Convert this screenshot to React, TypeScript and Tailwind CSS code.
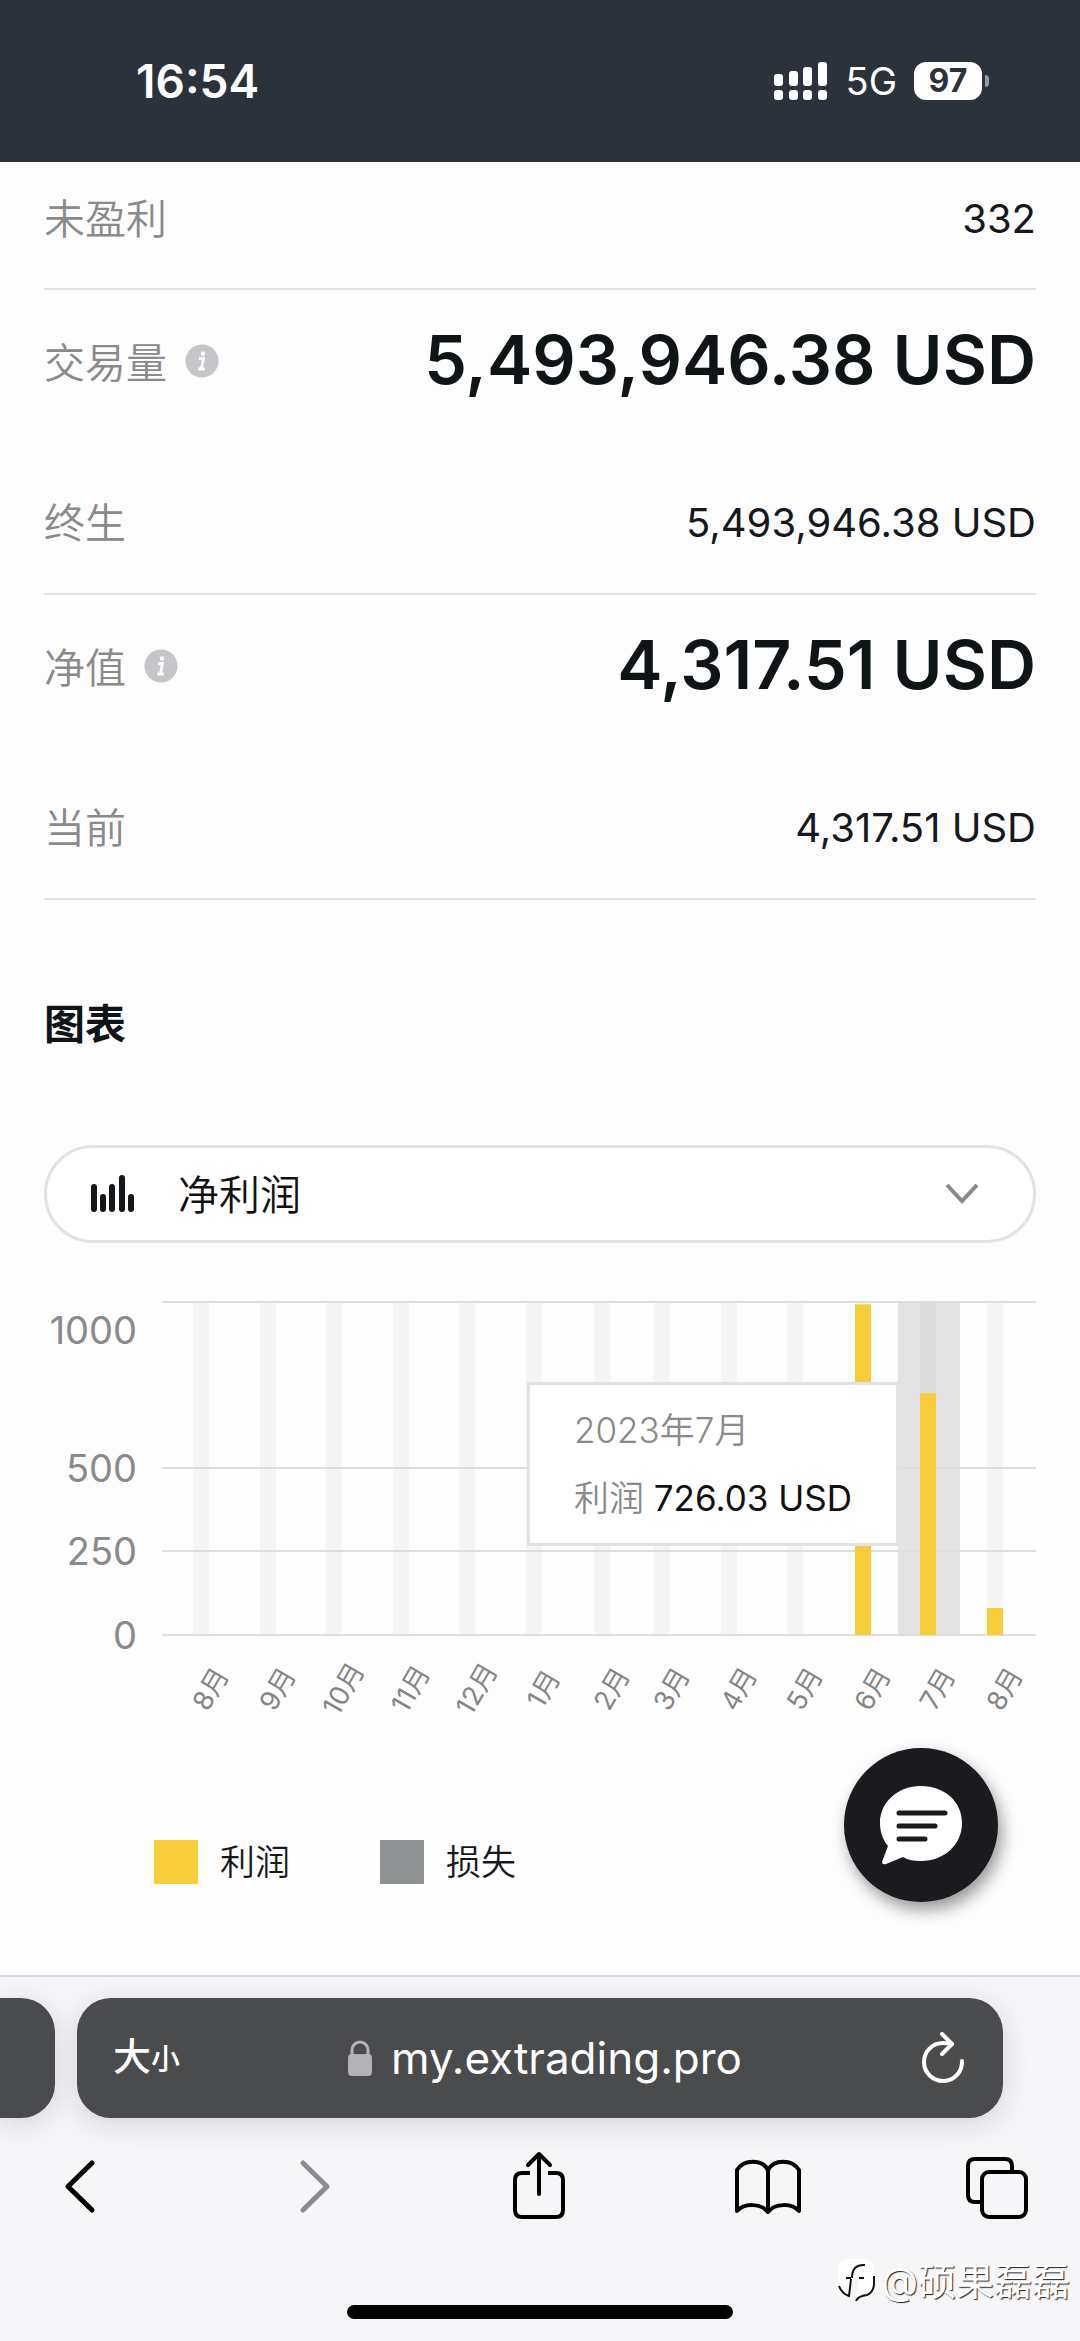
import React from "react";

const latin = "font-['Inter','Noto_Sans_CJK_SC',sans-serif]";

function InfoIcon() {
  return (
    <svg viewBox="0 0 34 34" className="h-[34px] w-[34px]" aria-hidden="true">
      <circle cx="17" cy="17" r="16.5" fill="#c5c5ca" />
      <circle cx="18" cy="9.6" r="2.3" fill="#fff" />
      <path d="M14 14.5h4.4l-1.9 10M13.2 25h6.6" stroke="#fff" strokeWidth="2.8" fill="none" />
    </svg>
  );
}

function Row({ label, value }: { label: string; value: string }) {
  return (
    <div className="flex items-center justify-between text-[41px] leading-[60px]">
      <dt className="font-[350] text-[#8a8a8a]">{label}</dt>
      <dd className="text-[40px] text-[#15181c]">{value}</dd>
    </div>
  );
}

function BigRow({ label, value }: { label: string; value: string }) {
  return (
    <div className="flex items-center justify-between leading-[80px]">
      <dt className="flex items-center gap-[18px] text-[41px] font-[350] text-[#8a8a8a]">
        <span className="pt-1">{label}</span>
        <button type="button" aria-label={label + "说明"}>
          <InfoIcon />
        </button>
      </dt>
      <dd className="pb-1 text-[68px] font-semibold text-[#0f1417]">{value}</dd>
    </div>
  );
}

function StatusBar() {
  return (
    <header className="flex h-[162px] items-center justify-between bg-[#2c323c] pr-[91px] pl-[136px] text-white">
      <time className="text-[46px] leading-[60px] font-semibold">16:54</time>
      <div className="flex items-center gap-[17px]">
        <svg viewBox="0 0 55 40" className="h-10 w-[55px]" fill="#fff" aria-hidden="true">
          <rect x="0" y="13" width="9" height="12" rx="3" />
          <rect x="15" y="10" width="9" height="15" rx="3" />
          <rect x="29" y="6" width="9" height="19" rx="3" />
          <rect x="44" y="1" width="9" height="24" rx="3" />
          <rect x="0" y="29" width="9" height="10" rx="3" />
          <rect x="15" y="29" width="9" height="10" rx="3" />
          <rect x="29" y="29" width="9" height="10" rx="3" />
          <rect x="44" y="29" width="9" height="10" rx="3" />
        </svg>
        <span className="text-[38px] leading-[44px]">5G</span>
        <div className="flex items-center gap-[3px]">
          <span className="w-[68px] rounded-xl bg-white text-center text-[32px] leading-[38px] font-bold text-[#2c323c]">97</span>
          <span className="h-3 w-1 rounded-r-full bg-[#9a9da3]" />
        </div>
      </div>
    </header>
  );
}

const months = [
  { x: 157, name: "8月", value: 0 },
  { x: 224, name: "9月", value: 0 },
  { x: 290, name: "10月", value: 0 },
  { x: 357, name: "11月", value: 0 },
  { x: 423, name: "12月", value: 0 },
  { x: 490, name: "1月", value: 0 },
  { x: 558, name: "2月", value: 0 },
  { x: 618, name: "3月", value: 0 },
  { x: 685, name: "4月", value: 0 },
  { x: 751, name: "5月", value: 0 },
  { x: 819, name: "6月", value: 993 },
  { x: 884, name: "7月", value: 726.03 },
  { x: 951, name: "8月", value: 81 },
];

const ticks = [
  { label: "1000", line: 3, text: 31 },
  { label: "500", line: 169, text: 169 },
  { label: "250", line: 252, text: 252 },
  { label: "0", line: 336, text: 336 },
];

function Chart() {
  return (
    <figure className="relative mt-14">
      <svg viewBox="0 0 992 436" className="block w-full" role="img" aria-label="净利润图表">
        {months.map((m) => (
          <rect key={m.x} x={m.x - 8} y="4" width="16" height="332" fill="#f5f5f5" />
        ))}
        <rect x="854" y="3" width="62" height="333" fill="#e3e3e3" />
        <rect x="876" y="3" width="16" height="333" fill="#dbdbdb" />
        {ticks.map((t) => (
          <g key={t.label}>
            <rect x="118" y={t.line - 1} width="874" height="2" fill="#dedede" />
            <text x="93" y={t.text + 14} textAnchor="end" fontSize="38" fill="#8a8a8a" fontWeight="400">
              {t.label}
            </text>
          </g>
        ))}
        {months.map((m) => (
          <g key={m.x}>
            <rect x={m.x - 8} y={336 - m.value * 0.333} width="16" height={m.value * 0.333} fill="#f8cd3c" />
            <text
              x={m.x + 10}
              y="399"
              textAnchor="middle"
              fontSize="27"
              fontWeight="400"
              fill="#858585"
              transform={`rotate(-60 ${m.x + 10} 390)`}
            >
              {m.name}
            </text>
          </g>
        ))}
      </svg>
      <figcaption className="absolute top-[83px] right-[137px] flex h-[164px] flex-col justify-center gap-5 border-[3px] border-[#e2e2e2] bg-white pr-11 pl-11 text-[35px] leading-[48px] whitespace-nowrap">
        <span className="font-[350] text-[#8a8a8a]">2023年7月</span>
        <span className="text-[#111]">
          <span className="font-[350] text-[#8a8a8a]">利润</span> 726.03 USD
        </span>
      </figcaption>
    </figure>
  );
}

function Select() {
  return (
    <div className="relative mt-[91px]">
      <svg viewBox="0 0 46 40" className="pointer-events-none absolute top-[29px] left-[46px] h-10 w-[46px]" stroke="#14181b" strokeWidth="6" strokeLinecap="round" aria-hidden="true">
        <path d="M4 13v22M13 23v12M22 13v22M32 4v31M41 23v12" />
      </svg>
      <select
        aria-label="图表类型"
        className="h-[98px] w-full appearance-none rounded-full border-[3px] border-[#e2e2e2] bg-white pt-[3px] pl-[131px] text-[41px] font-[350] text-[#111]"
      >
        <option>净利润</option>
      </select>
      <svg viewBox="0 0 34 22" className="pointer-events-none absolute top-[38px] right-[57px] h-[22px] w-[34px]" stroke="#8a8a8a" strokeWidth="4" fill="none" aria-hidden="true">
        <path d="M2 2l15 16L32 2" />
      </svg>
    </div>
  );
}

function Legend() {
  return (
    <div className="mt-[105px] flex gap-[90px] pl-[110px] text-[35px] leading-[44px] text-[#15181c]">
      <div className="flex gap-[22px]">
        <span className="size-11 bg-[#f8cd3c]" />
        <span className="font-[350]">利润</span>
      </div>
      <div className="flex gap-[22px]">
        <span className="size-11 bg-[#8f9293]" />
        <span className="font-[350]">损失</span>
      </div>
    </div>
  );
}

function ChatButton() {
  return (
    <button
      type="button"
      aria-label="聊天"
      className="absolute right-[82px] bottom-[73px] flex size-[154px] items-center justify-center rounded-full bg-[#1b1a1f] shadow-[4px_8px_16px_rgba(0,0,0,0.4)]"
    >
      <svg viewBox="0 0 84 80" className="h-20 w-[84px]" aria-hidden="true">
        <path d="M42 1C19 1 1 17 1 38c0 9 3 17 8 23L3 77q0 3 4 2l17-7c5 3 11 4 18 4 23 0 41-16 41-38S65 1 42 1z" fill="#fff" />
        <path d="M20 28h46M20 41h36M20 54h26" stroke="#1b1a1f" strokeWidth="5" strokeLinecap="round" />
      </svg>
    </button>
  );
}

function AddressBar() {
  return (
    <div className="flex gap-[22px] pt-[21px]">
      <div className="h-[120px] w-[55px] rounded-r-[34px] bg-[#4a4b4d] shadow-[0_6px_28px_rgba(0,0,0,0.14)]" />
      <div className="flex h-[120px] flex-1 items-center justify-between rounded-[34px] bg-[#4a4b4d] pr-[38px] pl-9 text-white shadow-[0_6px_28px_rgba(0,0,0,0.14)]">
        <button type="button" className="text-[38px] leading-[60px] font-medium" aria-label="大小">
          大<span className="text-[29px]">小</span>
        </button>
        <a href="https://my.extrading.pro" className="flex items-center gap-[18px] text-[44px] leading-[60px]">
          <svg viewBox="0 0 26 38" className="h-[38px] w-[26px]" aria-hidden="true">
            <rect x="1" y="15" width="24" height="22" rx="4" fill="#b3b3b5" />
            <path d="M5 16V11a8 8 0 0 1 16 0v5" fill="none" stroke="#b3b3b5" strokeWidth="3" />
          </svg>
          my.extrading.pro
        </a>
        <button type="button" aria-label="重新载入" className="flex w-14 justify-end">
          <svg viewBox="0 0 44 52" className="h-[52px] w-11" fill="none" stroke="#fff" strokeWidth="4" strokeLinecap="round" strokeLinejoin="round" aria-hidden="true">
            <path d="M41 29A19 19 0 1 1 22 11q5 0 9 1" />
            <path d="M21 2l10 10-10 10" />
          </svg>
        </button>
      </div>
      <div className="w-[55px]" />
    </div>
  );
}

function Toolbar() {
  return (
    <nav className="flex items-center justify-between pt-[29px] pr-[50px] pl-12 text-black" aria-label="浏览器">
      <button type="button" aria-label="后退" className="flex w-[66px] justify-center">
        <svg viewBox="0 0 60 80" className="h-20 w-[60px]" fill="none" stroke="#000" strokeWidth="5" strokeLinecap="round" strokeLinejoin="round" aria-hidden="true">
          <path d="M41 16L17 39.500l24 23.500" />
        </svg>
      </button>
      <button type="button" aria-label="前进" className="flex w-[66px] justify-center">
        <svg viewBox="0 0 60 80" className="h-20 w-[60px]" fill="none" stroke="#8b8b8d" strokeWidth="5" strokeLinecap="round" strokeLinejoin="round" aria-hidden="true">
          <path d="M23 16l24 23.500L23 63" />
        </svg>
      </button>
      <button type="button" aria-label="分享" className="flex w-[66px] justify-center">
        <svg viewBox="0 0 60 80" className="h-20 w-[60px]" fill="none" stroke="#000" strokeWidth="4" strokeLinecap="round" strokeLinejoin="round" aria-hidden="true">
          <path d="M21 26h-8q-7 0-7 7v30q0 7 7 7h34q7 0 7-7V33q0-7-7-7h-8" strokeLinecap="butt" />
          <path d="M30 47V7M19 18L30 7l11 11" />
        </svg>
      </button>
      <button type="button" aria-label="书签" className="flex w-[66px] justify-center">
        <svg viewBox="2 0 66 80" className="h-20 w-[66px]" fill="none" stroke="#000" strokeWidth="4" strokeLinecap="round" strokeLinejoin="round" aria-hidden="true">
          <path d="M35 23C29 12 11 12 4 23v41c7-8 24-8 31 1 7-9 24-9 31-1V23C59 12 41 12 35 23zM35 23v41" />
        </svg>
      </button>
      <button type="button" aria-label="标签页" className="flex w-[66px] justify-center">
        <svg viewBox="0 0 66 80" className="h-20 w-[66px]" fill="none" stroke="#000" strokeWidth="4" aria-hidden="true">
          <path d="M48 25v-6q0-7-7-7H11q-7 0-7 7v29q0 7 7 7h7" />
          <rect x="18" y="25" width="44" height="45" rx="7" />
        </svg>
      </button>
    </nav>
  );
}

function Watermark() {
  return (
    <div className="absolute right-2.5 bottom-[33px] flex items-center gap-1 text-[38px] leading-[54px] text-white [text-shadow:1px_1px_1px_#222]">
      <svg viewBox="0 0 40 46" className="h-[46px] w-10" aria-hidden="true">
        <path d="M12 1h14q11 0 11 12v12q0 10-8 14l-10 4v-5h-7Q1 34 1 25V13Q1 1 12 1z" fill="#fff" />
        <path d="M16 21l-3 17h6l4-17z" fill="#f4f4f6" />
        <path d="M28 7q-13-1-13 13M9 20h5M22 20h5M14 21l-2 17Q5 36 2 28M37 18v7q0 9-7 12-9 1-11 6" fill="none" stroke="#111" strokeWidth="2" />
      </svg>
      @硕果磊磊
    </div>
  );
}

export default function App() {
  return (
    <div className={`flex min-h-screen flex-col bg-[#fdfdfd] ${latin}`}>
      <StatusBar />
      <main className="relative flex-1 px-11 pb-[91px]">
        <dl>
          <div className="border-b-2 border-[#e2e2e2] pt-[27px] pb-[39px]">
            <Row label="未盈利" value="332" />
          </div>
          <div className="flex flex-col gap-[90px] border-b-2 border-[#e2e2e2] pt-[29px] pb-10">
            <BigRow label="交易量" value="5,493,946.38 USD" />
            <Row label="终生" value="5,493,946.38 USD" />
          </div>
          <div className="flex flex-col gap-[90px] border-b-2 border-[#e2e2e2] pt-[29px] pb-10">
            <BigRow label="净值" value="4,317.51 USD" />
            <Row label="当前" value="4,317.51 USD" />
          </div>
        </dl>
        <h2 className="mt-[94px] text-[41px] leading-[60px] font-bold text-[#0f1417]">图表</h2>
        <Select />
        <Chart />
        <Legend />
        <ChatButton />
      </main>
      <footer className="relative border-t-2 border-[#d3dde6] bg-[#f6f6f8] pb-[22px]">
        <AddressBar />
        <Toolbar />
        <div className="mx-auto mt-[78px] h-[14px] w-[386px] rounded-full bg-black" />
        <Watermark />
      </footer>
    </div>
  );
}
